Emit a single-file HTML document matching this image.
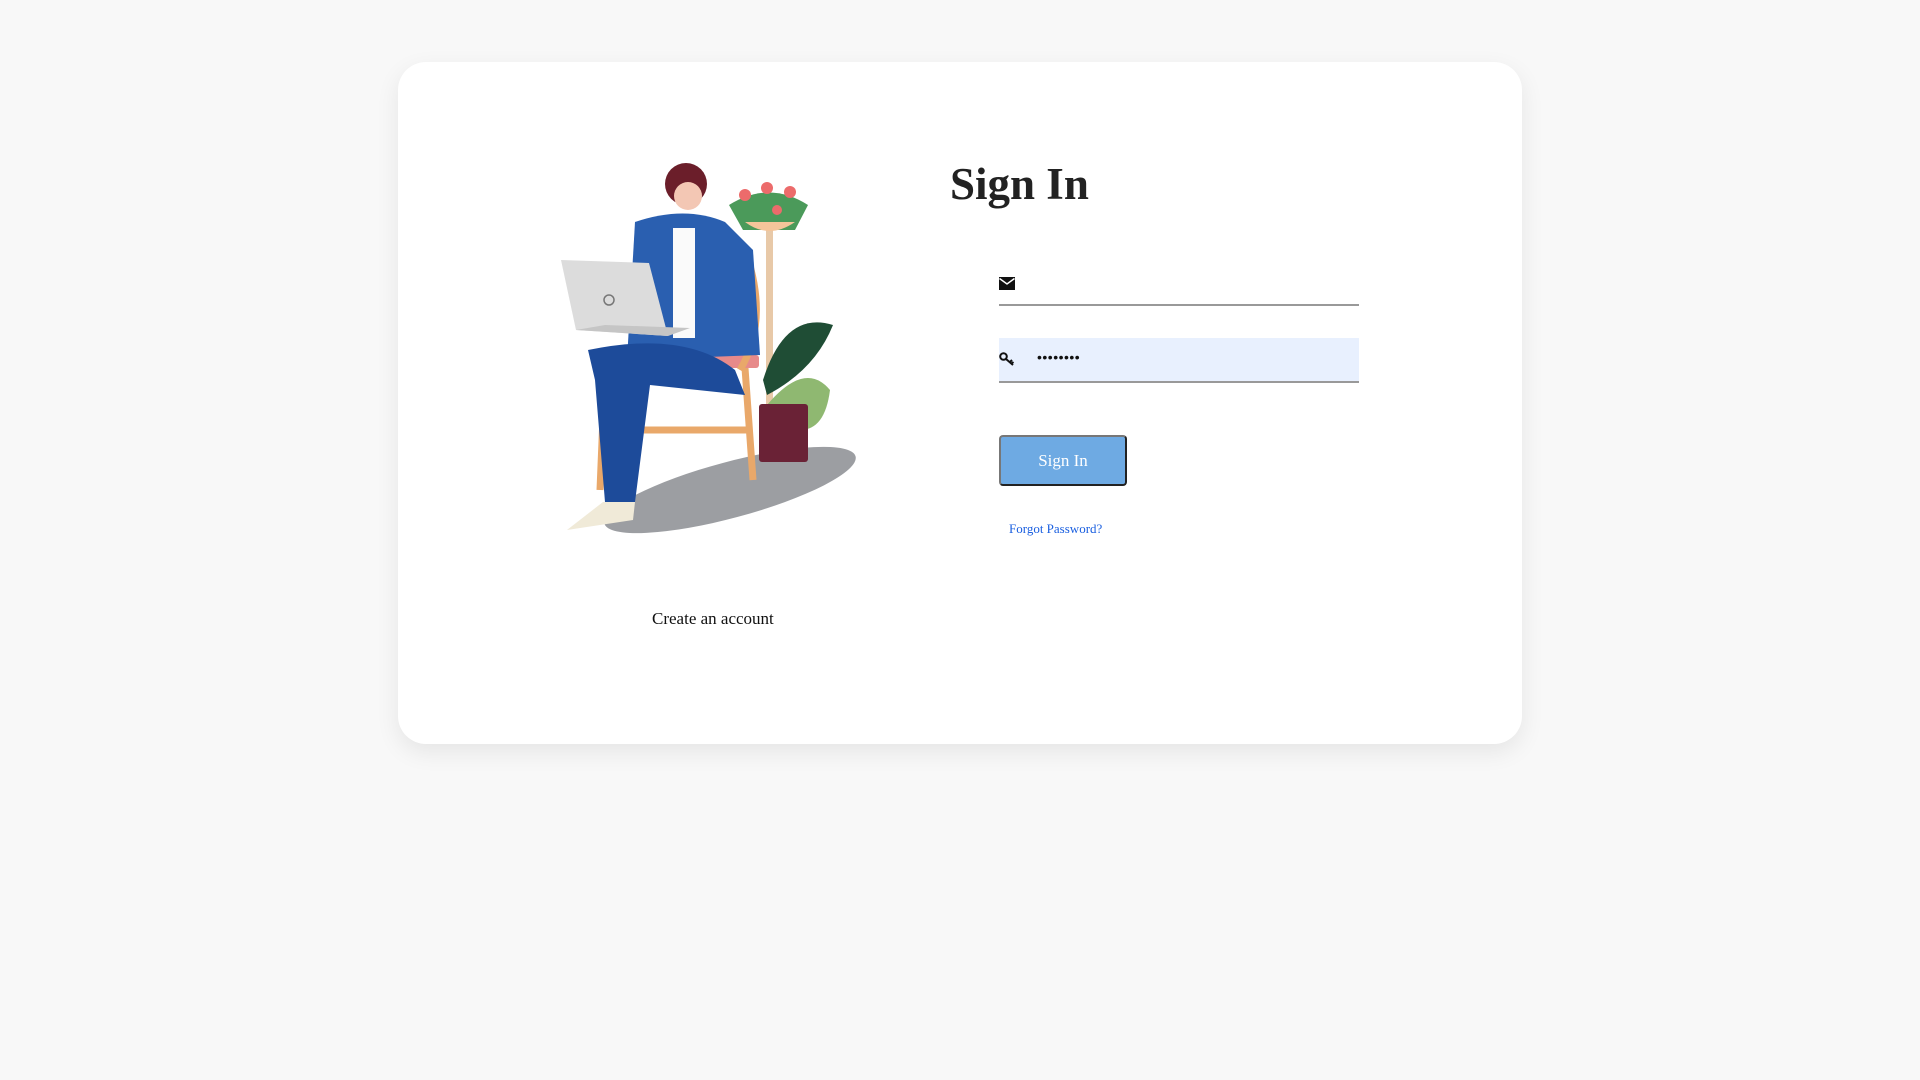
<!DOCTYPE html>
<html><head><meta charset="utf-8"><style>
html,body{margin:0;padding:0;}
body{width:1920px;height:1080px;background:#f8f8f8;font-family:"Liberation Serif",serif;position:relative;overflow:hidden;}
.card{position:absolute;left:398px;top:62px;width:1124px;height:682px;background:#fff;border-radius:28px;box-shadow:0 8px 24px rgba(0,0,0,0.08);}
.abs{position:absolute;}
h1{position:absolute;left:950px;top:158px;margin:0;font-size:45px;font-weight:bold;color:#222;line-height:52px;}
.line{position:absolute;left:999px;width:360px;border-bottom:2px solid #999;}
.pw{position:absolute;left:999px;top:338px;width:360px;height:43px;background:#e8f0fe;border-bottom:2px solid #999;}
.btn{position:absolute;left:999px;top:435px;width:124px;height:47px;background:#6eaae3;border:2px solid #777;border-right-color:#222;border-bottom-color:#222;border-radius:4px;color:#fff;font-size:17px;text-align:center;line-height:47px;}
</style></head><body>
<div class="card"></div>
<h1>Sign In</h1>
<svg class="abs" style="left:999px;top:277px" width="16" height="13" viewBox="0 0 16 13"><rect x="0" y="0" width="16" height="13" fill="#111"/><path d="M0.5 1.5 L8 7 L15.5 1.5" stroke="#fff" stroke-width="1.5" fill="none"/></svg>
<div class="line" style="top:304px"></div>
<div class="pw"></div>
<svg class="abs" style="left:999px;top:352px" width="16" height="14" viewBox="0 0 16 14"><circle cx="4.5" cy="4.5" r="3.3" stroke="#111" stroke-width="2" fill="none"/><path d="M7 7 L14 13 M11 10 L13 8 M12.5 11.5 L14.5 10" stroke="#111" stroke-width="2" fill="none"/></svg>
<div class="abs" style="left:1037px;top:349px;font-size:14px;letter-spacing:0.5px;color:#111;font-family:'Liberation Sans',sans-serif;">••••••••</div>
<div class="btn">Sign In</div>
<div class="abs" style="left:1009px;top:521px;font-size:13px;color:#1a5fe0;">Forgot Password?</div>
<div class="abs" style="left:652px;top:609px;font-size:17px;color:#111;">Create an account</div>
<svg class="abs" style="left:555px;top:160px" width="330" height="385" viewBox="0 0 330 385">
<ellipse cx="175" cy="330" rx="130" ry="28" fill="#4a4f55" opacity="0.55" transform="rotate(-15 175 330)"/>
<rect x="211" y="66" width="7" height="228" fill="#e8c9a8"/>
<path d="M174 45 Q214 20 253 45 L240 70 L188 70 Z" fill="#4b9a5a"/>
<circle cx="190" cy="35" r="6" fill="#ec6b6b"/><circle cx="212" cy="28" r="6" fill="#ec6b6b"/><circle cx="235" cy="32" r="6" fill="#ec6b6b"/><circle cx="222" cy="50" r="5" fill="#ec6b6b"/>
<path d="M190 62 Q214 80 240 62 Z" fill="#f4c59a"/>
<path d="M208 220 Q230 150 278 165 Q260 210 212 235 Z" fill="#1f4d35"/>
<path d="M212 245 Q250 200 275 230 Q270 270 245 270 Z" fill="#8fb871"/>
<rect x="204" y="244" width="49" height="58" rx="3" fill="#6a2236"/>
<rect x="39" y="195" width="165" height="13" rx="3" fill="#e78a8a"/>
<path d="M50 208 L45 330 M190 208 L198 320 M48 270 L195 270" stroke="#e9a86a" stroke-width="7" fill="none"/>
<path d="M185 210 Q215 160 190 90" stroke="#e9a86a" stroke-width="7" fill="none"/>
<path d="M80 62 Q130 45 170 62 L198 90 L205 195 L72 200 Z" fill="#2a5fb0"/>
<rect x="118" y="68" width="22" height="110" fill="#fafafa"/>
<circle cx="131" cy="24" r="21" fill="#6b1e2a"/>
<circle cx="133" cy="36" r="14" fill="#f3c7b4"/>
<path d="M33 190 Q130 170 180 210 L190 235 L95 225 L80 342 L50 342 L40 220 Z" fill="#1d4b9a"/>
<path d="M48 342 L80 342 L78 360 L12 370 Z" fill="#f0ead8"/>
<path d="M6 100 L94 103 L113 176 L21 170 Z" fill="#dcdcdc"/>
<path d="M21 170 L113 176 L135 168 L50 165 Z" fill="#c5c5c5"/>
<circle cx="54" cy="140" r="5" fill="none" stroke="#777" stroke-width="1.5"/>
</svg>
</body></html>
